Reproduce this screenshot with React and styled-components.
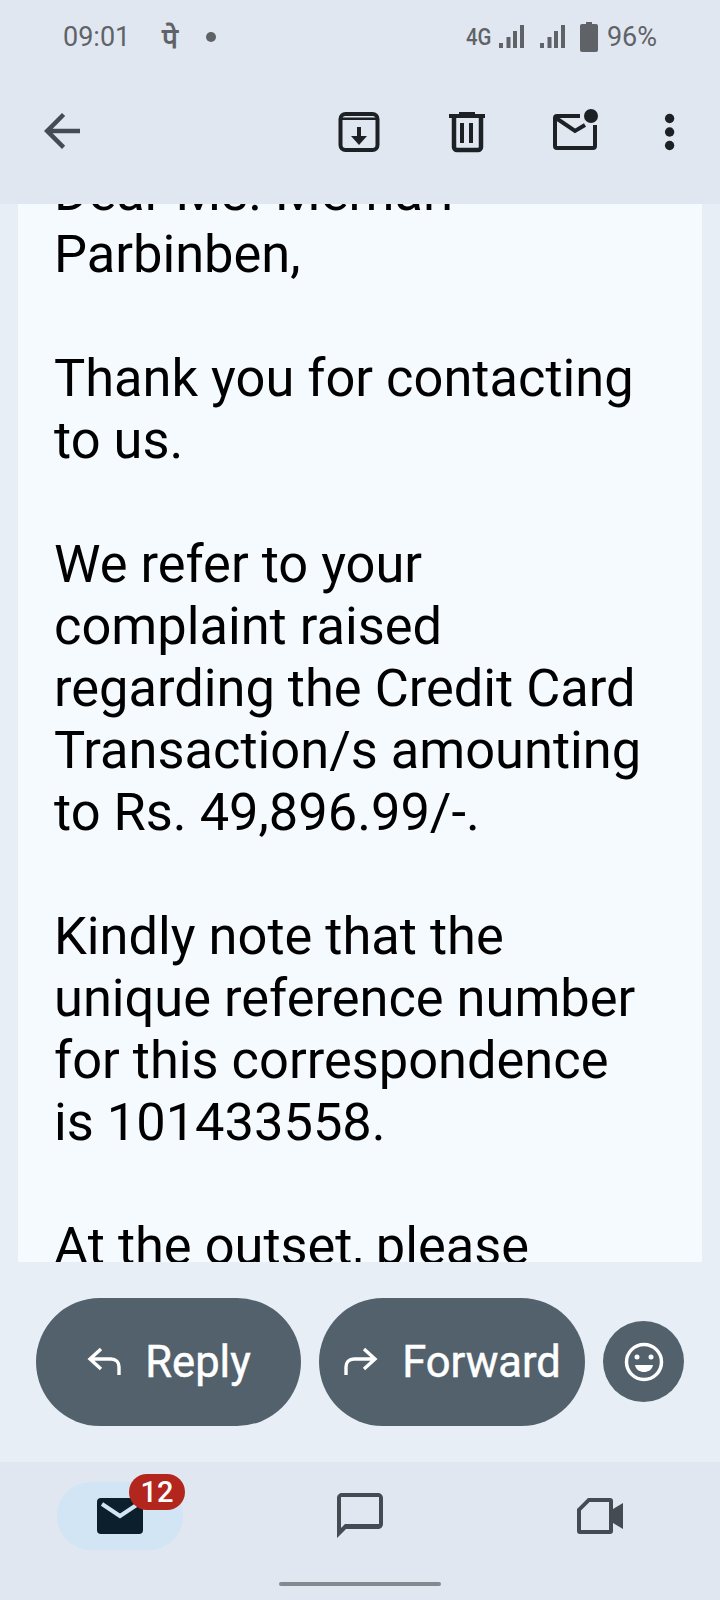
import React from "react";
import styled, { createGlobalStyle } from "styled-components";

const GlobalStyle = createGlobalStyle`
  html, body {
    margin: 0;
    padding: 0;
    background: #e7eef6;
  }
  * {
    box-sizing: border-box;
  }
`;

const Screen = styled.div`
  width: 720px;
  height: 1600px;
  display: flex;
  flex-direction: column;
  background: #e7eef6;
  font-family: Roboto, "Liberation Sans", sans-serif;
  overflow: hidden;
`;

const Header = styled.header`
  height: 204px;
  background: #e1e7f0;
  flex: none;
`;

const StatusBar = styled.div`
  height: 74px;
  padding: 0 63px;
  display: flex;
  align-items: center;
  color: #5f6368;
  font-size: 27px;
`;

const Clock = styled.span`
  width: 64px;
`;

const NotifyGlyph = styled.span`
  margin-left: 35px;
  font-weight: 700;
  font-size: 28px;
  width: 18px;
`;

const NotifyDot = styled.span`
  margin-left: 26px;
  width: 10px;
  height: 10px;
  border-radius: 50%;
  background: #5f6368;
`;

const StatusRight = styled.div`
  margin-left: auto;
  display: flex;
  align-items: center;
`;

const NetworkLabel = styled.span`
  font-size: 24px;
  font-weight: 500;
  transform: scaleX(0.85);
  transform-origin: left center;
  width: 33px;
`;

const Bars = styled.svg`
  width: 25px;
  height: 24px;
  margin-right: 16px;
  fill: #5f6368;
`;

const Battery = styled.svg`
  width: 18px;
  height: 30px;
  margin-left: -1px;
  fill: #5f6368;
`;

const BatteryLabel = styled.span`
  margin-left: 9px;
`;

const Toolbar = styled.div`
  height: 112px;
  padding-left: 35px;
  display: flex;
  align-items: center;
  color: #1d2125;
`;

const ToolIcon = styled.svg`
  width: 54px;
  height: 54px;
  flex: none;
  fill: currentColor;
  margin-left: ${props => props.$gap || 0}px;
  color: ${props => props.$color || "inherit"};
`;

const Card = styled.main`
  height: 1058px;
  flex: none;
  margin: 0 18px;
  padding: 0 36px;
  background: #f5faff;
  overflow: hidden;
  color: #000;
  font-size: 52.4px;
  line-height: 62px;
`;

const Body = styled.div`
  margin-top: -43px;
`;

const Paragraph = styled.p`
  margin: 0 0 62px;
  white-space: pre-line;
`;

const Actions = styled.div`
  height: 200px;
  flex: none;
  padding: 0 36px;
  display: flex;
  align-items: center;
  gap: 18px;
`;

const PillButton = styled.button`
  width: ${props => props.$width}px;
  height: 128px;
  border: 0;
  border-radius: 64px;
  background: #52616c;
  color: #fff;
  font-family: inherit;
  font-size: 43.500px;
  font-weight: 400;
  -webkit-text-stroke: 0.5px #fff;
  display: flex;
  align-items: center;
  justify-content: center;
  gap: 23px;
  padding: 0;
`;

const PillIcon = styled.svg`
  width: 36px;
  height: 30px;
  fill: none;
  stroke: #fff;
  stroke-width: 3.4;
`;

const EmojiButton = styled.button`
  width: 81px;
  height: 81px;
  border: 0;
  border-radius: 50%;
  background: #52616c;
  padding: 0;
  margin-bottom: 1px;
  display: flex;
  align-items: center;
  justify-content: center;
`;

const NavBar = styled.nav`
  flex: 1;
  position: relative;
  background: #e1e7f0;
  display: grid;
  grid-template-columns: 240px 240px 240px;
  padding-top: 20px;
  justify-items: center;
  align-items: start;
`;

const NavPill = styled.div`
  position: relative;
  width: 126px;
  height: 68px;
  border-radius: 34px;
  background: ${props => (props.$active ? "#d2e5f5" : "transparent")};
  display: flex;
  align-items: center;
  justify-content: center;
`;

const Badge = styled.span`
  position: absolute;
  left: 72px;
  top: -8px;
  width: 56px;
  height: 36px;
  border-radius: 18px;
  background: #b3261e;
  color: #fff;
  font-size: 29px;
  font-weight: 500;
  display: flex;
  align-items: center;
  justify-content: center;
`;

const HomeIndicator = styled.div`
  position: absolute;
  left: 279px;
  bottom: 14px;
  width: 162px;
  height: 4px;
  border-radius: 2px;
  background: #85898e;
`;

const paragraphs = [
  "Dear Ms. Memari\nParbinben,",
  "Thank you for contacting\nto us.",
  "We refer to your\ncomplaint raised\nregarding the Credit Card\nTransaction/s amounting\nto Rs. 49,896.99/-.",
  "Kindly note that the\nunique reference number\nfor this correspondence\nis 101433558.",
  "At the outset, please",
];

const SignalBars = () => (
  <Bars viewBox="0 0 25 24">
    <rect x="0" y="18" width="4" height="5" />
    <rect x="7.500" y="12" width="4" height="11" />
    <rect x="14" y="6" width="4" height="17" />
    <rect x="21" y="0" width="4" height="23" />
  </Bars>
);

const App = () => (
  <Screen>
    <GlobalStyle />
    <Header>
      <StatusBar>
        <Clock>09:01</Clock>
        <NotifyGlyph>पे</NotifyGlyph>
        <NotifyDot />
        <StatusRight>
          <NetworkLabel>4G</NetworkLabel>
          <SignalBars />
          <SignalBars />
          <Battery viewBox="0 0 18 30">
            <path d="M6 0h6v2h4a2 2 0 0 1 2 2v24a2 2 0 0 1-2 2H2a2 2 0 0 1-2-2V4a2 2 0 0 1 2-2h4z" />
          </Battery>
          <BatteryLabel>96%</BatteryLabel>
        </StatusRight>
      </StatusBar>
      <Toolbar>
        <ToolIcon $color="#444b53" viewBox="0 -0.400 24 24">
          <path d="M20 11H7.830l5.590-5.590L12 4l-8 8 8 8 1.410-1.410L7.830 13H20v-2z" />
        </ToolIcon>
        <ToolIcon $gap={244} viewBox="0 0 54 54">
          <rect x="7.500" y="11" width="37" height="36" rx="5" fill="none" stroke="currentColor" strokeWidth="4" />
          <rect x="8" y="14.500" width="36" height="2.500" />
          <path d="M24 24h4v9h6l-8 9-8-9h6z" />
        </ToolIcon>
        <ToolIcon $gap={53} viewBox="0 0 54 54">
          <path d="M19 9h16v3H19z" />
          <rect x="9" y="11" width="36" height="4" />
          <path d="M14 14v30a3 3 0 0 0 3 3h21a3 3 0 0 0 3-3V14" fill="none" stroke="currentColor" strokeWidth="4.500" />
          <rect x="20" y="20" width="4" height="20" />
          <rect x="29" y="20" width="4" height="20" />
        </ToolIcon>
        <ToolIcon $gap={54} viewBox="0 0 54 54">
          <path d="M32 13H9a2 2 0 0 0-2 2v28a2 2 0 0 0 2 2h36a2 2 0 0 0 2-2V22" fill="none" stroke="currentColor" strokeWidth="4" />
          <path d="M8 15l19 13 10-6" fill="none" stroke="currentColor" strokeWidth="4" />
          <circle cx="43" cy="13" r="7" />
        </ToolIcon>
        <ToolIcon $gap={41} viewBox="0 0 54 54">
          <circle cx="26.600" cy="15.500" r="4.700" />
          <circle cx="26.600" cy="29" r="4.700" />
          <circle cx="26.600" cy="42.500" r="4.700" />
        </ToolIcon>
      </Toolbar>
    </Header>
    <Card>
      <Body>
        {paragraphs.map(text => (
          <Paragraph key={text}>{text}</Paragraph>
        ))}
      </Body>
    </Card>
    <Actions>
      <PillButton $width={265}>
        <PillIcon viewBox="0 0 36 30">
          <path d="M15 2 4 12l11 10M4 12h21c5 0 8 3 8 8v8" />
        </PillIcon>
        Reply
      </PillButton>
      <PillButton $width={266}>
        <PillIcon viewBox="0 0 36 30">
          <path d="M21 2l11 10-11 10M32 12H11c-5 0-8 3-8 8v8" />
        </PillIcon>
        Forward
      </PillButton>
      <EmojiButton>
        <svg width="42" height="42" viewBox="0 0 42 42">
          <circle cx="21" cy="21" r="17.500" fill="none" stroke="#fff" strokeWidth="3.500" />
          <circle cx="14" cy="16" r="2.500" fill="#fff" />
          <circle cx="28" cy="16" r="2.500" fill="#fff" />
          <path d="M12 24h18c-1 5-5 7-9 7s-8-2-9-7z" fill="#fff" />
        </svg>
      </EmojiButton>
    </Actions>
    <NavBar>
      <NavPill $active>
        <svg width="46" height="36" viewBox="0 0 46 36">
          <rect width="46" height="36" rx="4" fill="#0c1f2c" />
          <path d="M5 6l18 12L41 6" fill="none" stroke="#d2e5f5" strokeWidth="4" />
        </svg>
        <Badge>12</Badge>
      </NavPill>
      <NavPill>
        <svg width="46" height="46" viewBox="0 0 46 46">
          <path d="M5 0h36c2.500 0 5 2 5 5v26c0 3-2.500 5-5 5H9L0 45V5c0-3 2.500-5 5-5zm-1 4v31l4-4h34V4z" fill="#444b53" fillRule="evenodd" />
        </svg>
      </NavPill>
      <NavPill>
        <svg width="46" height="36" viewBox="0 0 46 36">
          <path d="M11 0h22c2 0 3 1 3 3v8l10-6v26l-10-6v8c0 2-1 3-3 3H3c-2 0-3-1-3-3V11zm1.500 4L4 12.500V32h28V4z" fill="#444b53" fillRule="evenodd" />
        </svg>
      </NavPill>
      <HomeIndicator />
    </NavBar>
  </Screen>
);

export default App;
